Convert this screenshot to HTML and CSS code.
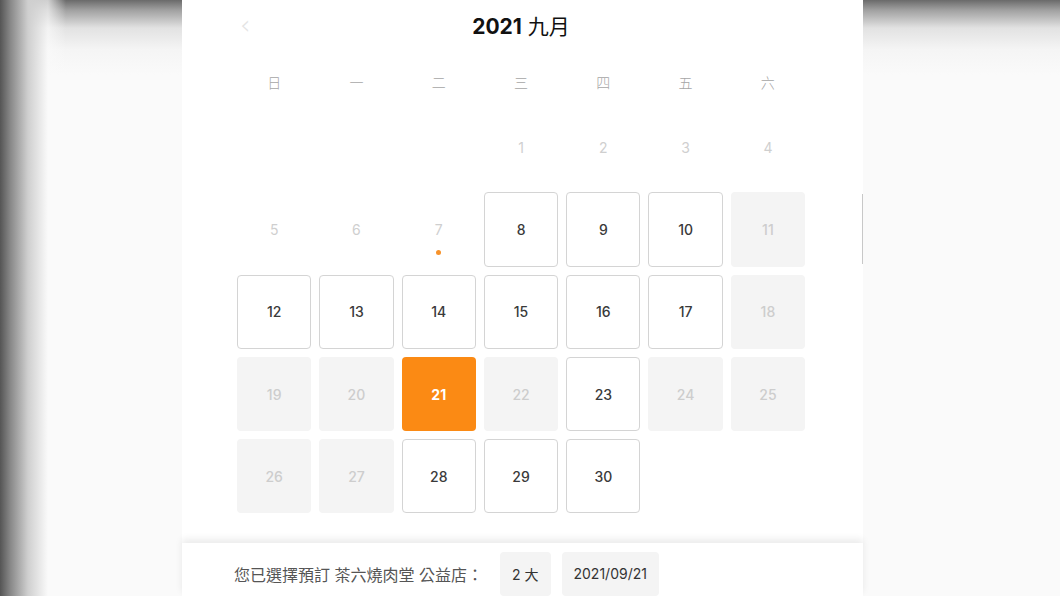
FILE: index.html
```html
<!DOCTYPE html>
<html lang="zh-Hant">
<head>
    <meta charset="UTF-8">
    <meta name="viewport" content="width=device-width, initial-scale=1.0">
    <title>選擇日期</title>
    <link rel="stylesheet" href="styles.css">
</head>
<body>
    <div class="panel">
        <div class="calendar">
            <div class="cal-head">
                <span class="prev">&#8249;</span>
                <h2 class="month"><b>2021</b> 九月</h2>
            </div>
            <div class="weekdays">
                <span>日</span><span>一</span><span>二</span><span>三</span><span>四</span><span>五</span><span>六</span>
            </div>
            <div class="days">
                <span class="day"></span>
                <span class="day"></span>
                <span class="day"></span>
                <span class="day out">1</span>
                <span class="day out">2</span>
                <span class="day out">3</span>
                <span class="day out">4</span>

                <span class="day out">5</span>
                <span class="day out">6</span>
                <span class="day out today">7</span>
                <span class="day open">8</span>
                <span class="day open">9</span>
                <span class="day open">10</span>
                <span class="day off">11</span>

                <span class="day open">12</span>
                <span class="day open">13</span>
                <span class="day open">14</span>
                <span class="day open">15</span>
                <span class="day open">16</span>
                <span class="day open">17</span>
                <span class="day off">18</span>

                <span class="day off">19</span>
                <span class="day off">20</span>
                <span class="day picked">21</span>
                <span class="day off">22</span>
                <span class="day open">23</span>
                <span class="day off">24</span>
                <span class="day off">25</span>

                <span class="day off">26</span>
                <span class="day off">27</span>
                <span class="day open">28</span>
                <span class="day open">29</span>
                <span class="day open">30</span>
            </div>
        </div>
        <div class="peek"></div>
        <div class="summary">
            <span class="summary-text">您已選擇預訂 茶六燒肉堂 公益店：</span>
            <span class="chip">2 大</span>
            <span class="chip">2021/09/21</span>
        </div>
    </div>
</body>
</html>
```

FILE: styles.css
```css
html, body {
    height: 100%;
}
body {
    margin: 0;
    overflow: hidden;
    font-family: Inter, "Noto Sans CJK TC", sans-serif;
    color: #333;
    background-color: #fafafa;
    background-image:
        linear-gradient(to right, #555 0, #868686 10px, #cfcfcf 28px, rgba(250,250,250,0.7) 48px, rgba(250,250,250,0) 66px),
        linear-gradient(to bottom, #6a6a6a 0, #a0a0a0 10px, #e2e2e2 28px, #f5f5f5 50px, #fafafa 75px);
}
.panel {
    position: relative;
    width: 681px;
    height: 100%;
    margin-left: 182px;
    background: #fff;
    display: flex;
    flex-direction: column;
}
.calendar {
    flex: 1;
    padding: 0 58px 0 55px;
}
.cal-head {
    height: 50px;
    display: flex;
    align-items: center;
    justify-content: center;
    position: relative;
}
.prev {
    position: absolute;
    left: 3px;
    top: 12px;
    font-size: 26px;
    line-height: 1;
    color: #e4e4e4;
    font-family: "DejaVu Sans", sans-serif;
    font-weight: 200;
}
.month {
    margin: 0;
    font-size: 21px;
    font-weight: 400;
    color: #111;
}
.month b {
    font-weight: 700;
}
.weekdays {
    margin-top: 12px;
    height: 40px;
    display: grid;
    grid-template-columns: repeat(7, 1fr);
    gap: 8px;
    align-items: center;
    text-align: center;
    font-size: 14px;
    color: #a5a5a5;
    font-weight: 300;
}
.days {
    margin-top: 8px;
    display: grid;
    grid-template-columns: repeat(7, 1fr);
    gap: 8px;
}
.day {
    position: relative;
    aspect-ratio: 1;
    box-sizing: border-box;
    border-radius: 4px;
    display: flex;
    align-items: center;
    justify-content: center;
    font-size: 14px;
    font-weight: 500;
}
.out {
    color: #cfcfcf;
    font-weight: 400;
}
.today::after {
    content: "";
    position: absolute;
    left: 50%;
    top: 58px;
    width: 5px;
    height: 5px;
    margin-left: -2.5px;
    border-radius: 50%;
    background: #f7922a;
}
.open {
    border: 1px solid #d4d4d4;
    color: #3a3a3a;
}
.off {
    background: #f4f4f4;
    color: #cdcdcd;
}
.picked {
    background: #fb8a14;
    color: #fff;
    font-weight: 700;
}
.peek {
    position: absolute;
    right: 0;
    top: 194px;
    height: 70px;
    border-left: 1px solid #c8c8c8;
}
.summary {
    height: 53px;
    box-sizing: border-box;
    padding: 8px 0 0 52px;
    display: flex;
    align-items: center;
    gap: 11px;
    background: #fff;
    box-shadow: 0 -4px 7px rgba(0, 0, 0, 0.08);
}
.summary-text {
    font-size: 16px;
    color: #555;
    margin-right: 6px;
}
.chip {
    height: 44px;
    padding: 0 12px;
    display: flex;
    align-items: center;
    background: #f4f4f4;
    border-radius: 4px;
    font-size: 14px;
    color: #333;
}
```
